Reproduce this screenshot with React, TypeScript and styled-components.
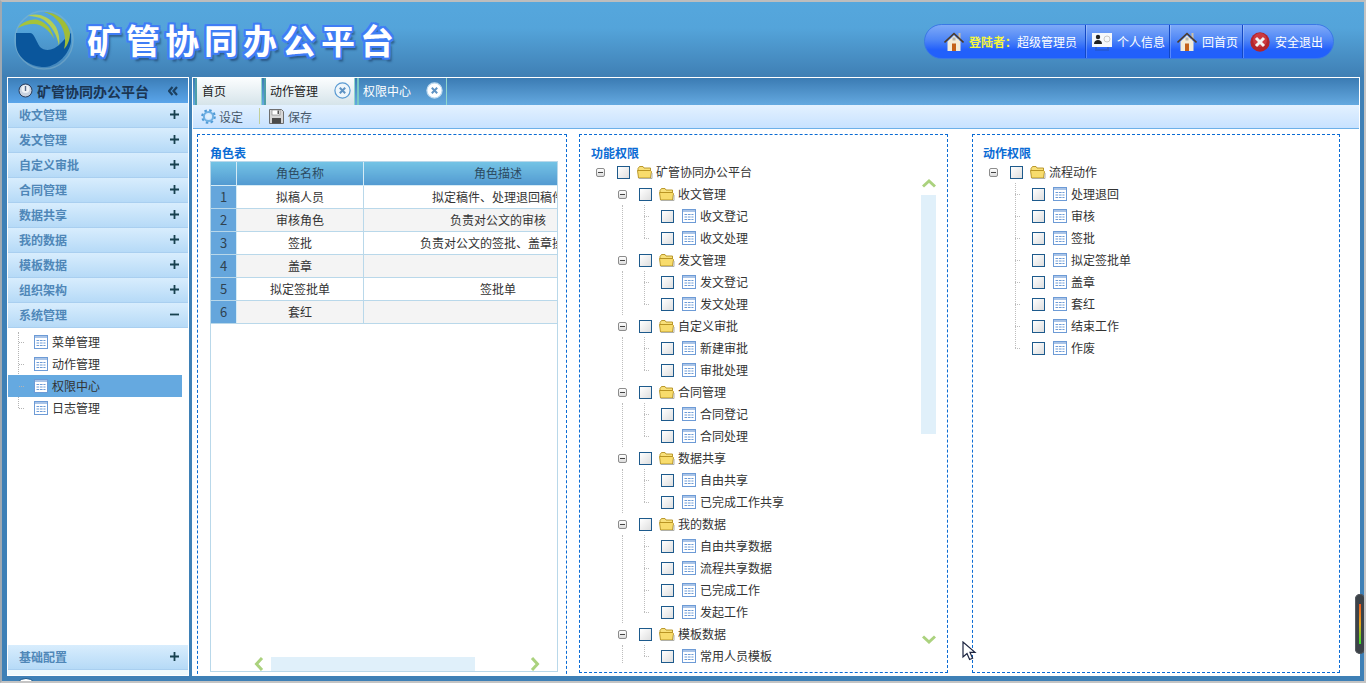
import React from 'react';
import styled, { createGlobalStyle } from 'styled-components';

const GlobalStyle = createGlobalStyle`
  html, body {
    margin: 0;
    padding: 0;
    background: #c4c4c4;
    overflow: hidden;
  }
  body, table {
    font-family: "Noto Sans CJK SC", "Liberation Sans", sans-serif;
    font-size: 12px;
  }
`;

const ACCORDION_TOP = ['收文管理', '发文管理', '自定义审批', '合同管理', '数据共享', '我的数据', '模板数据', '组织架构'];
const SYSTEM_ITEMS = ['菜单管理', '动作管理', '权限中心', '日志管理'];

const ROLES = [
  ['拟稿人员', '拟定稿件、处理退回稿件'],
  ['审核角色', '负责对公文的审核'],
  ['签批', '负责对公文的签批、盖章操作'],
  ['盖章', ''],
  ['拟定签批单', '签批单'],
  ['套红', ''],
];

const FUNCTION_TREE = [
  { name: '收文管理', leaves: ['收文登记', '收文处理'] },
  { name: '发文管理', leaves: ['发文登记', '发文处理'] },
  { name: '自定义审批', leaves: ['新建审批', '审批处理'] },
  { name: '合同管理', leaves: ['合同登记', '合同处理'] },
  { name: '数据共享', leaves: ['自由共享', '已完成工作共享'] },
  { name: '我的数据', leaves: ['自由共享数据', '流程共享数据', '已完成工作', '发起工作'] },
  { name: '模板数据', leaves: ['常用人员模板'] },
];

const ACTION_LEAVES = ['处理退回', '审核', '签批', '拟定签批单', '盖章', '套红', '结束工作', '作废'];

const PageTag = styled.div`
  position: relative;
  box-sizing: border-box;
  width: 1366px;
  height: 683px;
  display: flex;
  flex-direction: column;
  overflow: hidden;
  border-top: 2px solid #bdbdbd;
  border-left: 2px solid #9fa9b2;
  border-right: 2px solid #c4c4c4;
  border-bottom: 2px solid #c4c4c4;
  background: #3e80b6;
`;

const HeaderTag = styled.header`
  height: 75px;
  flex: none;
  display: flex;
  align-items: center;
  padding: 0 30px 0 12px;
  background: linear-gradient(#55a7dd 0%, #54a4da 35%, #3f7fb4 100%);
`;

const BrandTag = styled.div`
  display: flex;
  align-items: center;
  gap: 11px;
  margin-right: auto;
`;

const TitleTag = styled.h1`
  margin: 0;
  color: #fff;
  font-size: 34px;
  font-weight: 700;
  line-height: 44px;
  letter-spacing: 5px;
  white-space: nowrap;
  text-shadow: 2px 0 0 #3f7df5, -2px 0 0 #3f7df5, 0 2px 0 #3f7df5, 0 -2px 0 #3f7df5, 2px 2px 0 #3f7df5,
    -2px 2px 0 #3f7df5, 2px -2px 0 #3f7df5, -2px -2px 0 #3f7df5, 3px 4px 2px rgba(20, 50, 90, 0.55);
`;

const PillTag = styled.nav`
  display: flex;
  height: 35px;
  margin-top: 4px;
  box-sizing: border-box;
  overflow: hidden;
  border: 1px solid #3a78e6;
  border-radius: 18px;
  background: linear-gradient(#7eaaf8 0%, #4f86f6 45%, #2360fb 75%, #2060fb 100%);
`;

const PillItemTag = styled.div<{ $width: number; $inset: number; $last?: boolean }>`
  width: ${({ $width }) => $width}px;
  box-sizing: border-box;
  display: flex;
  align-items: center;
  gap: 5px;
  padding-left: ${({ $inset }) => $inset}px;
  color: #fff;
  white-space: nowrap;
  border-right: ${({ $last }) => ($last ? '0' : '1px solid #1248c4')};
  box-shadow: ${({ $last }) => ($last ? 'none' : '1px 0 0 rgba(255, 255, 255, 0.25)')};
`;

const GreetingTag = styled.b`
  color: #f6f63c;
`;

const BodyTag = styled.main`
  flex: 1;
  min-height: 0;
  display: flex;
  gap: 3px;
  padding: 0 2px 5px 5px;
`;

const SidebarTag = styled.aside`
  width: 182px;
  box-sizing: border-box;
  flex: none;
  display: flex;
  flex-direction: column;
  border: 1px solid #fff;
  background: #fff;
  padding-bottom: 5px;
  box-shadow: inset 0 -6px 0 #eef9fc;
`;

const SidebarHeadTag = styled.div`
  height: 25px;
  flex: none;
  display: flex;
  align-items: center;
  gap: 4px;
  padding: 0 10px 0 10px;
  color: #1b3552;
  font-size: 14px;
  font-weight: 700;
  background: linear-gradient(#3c7eb8, #5aa5ea);
`;

const SidebarHeadTextTag = styled.span`
  flex: 1;
  white-space: nowrap;
`;

const AccordionTag = styled.div`
  height: 25px;
  box-sizing: border-box;
  flex: none;
  display: flex;
  align-items: center;
  justify-content: space-between;
  padding: 0 9px 2px 11px;
  color: #4f87b8;
  font-weight: 700;
  border-bottom: 1px solid #a9cff0;
  background: linear-gradient(#d8edfd, #b6daf7);
`;

const SubListTag = styled.ul`
  position: relative;
  flex: 1;
  list-style: none;
  margin: 0;
  padding: 3px 0 0;

  &::before {
    content: '';
    position: absolute;
    left: 10px;
    top: 4px;
    height: 76px;
    border-left: 1px dotted #b4b4b4;
  }
`;

const SubItemTag = styled.li<{ $active?: boolean }>`
  position: relative;
  height: 22px;
  width: 174px;
  display: flex;
  align-items: center;
  padding-left: 25px;
  box-sizing: border-box;
  color: #333;
  background: ${({ $active }) => ($active ? '#65a9e0' : 'transparent')};

  &::before {
    content: '';
    position: absolute;
    left: 11px;
    width: 5px;
    border-top: 1px dotted #b4b4b4;
  }
`;

const MainTag = styled.section`
  width: 1168px;
  box-sizing: border-box;
  display: flex;
  flex-direction: column;
  border: 1px solid #fff;
  background: #fff;
`;

const TabStripTag = styled.div`
  height: 27px;
  flex: none;
  display: flex;
  align-items: stretch;
  gap: 2px;
  padding-left: 2px;
  background: linear-gradient(#3b7bb3, #64a9e0);
`;

const TabTag = styled.div<{ $width: number; $inset: number; $active?: boolean }>`
  width: ${({ $width }) => $width}px;
  box-sizing: border-box;
  display: flex;
  align-items: center;
  justify-content: space-between;
  padding: 0 3px 2px ${({ $inset }) => $inset}px;
  color: ${({ $active }) => ($active ? '#fff' : '#1c1c1c')};
  border-left: 2px solid ${({ $active }) => ($active ? '#76c8c4' : '#4f9fa8')};
  border-right: 1px solid #8fd6cc;
  background: ${({ $active }) =>
    $active ? 'linear-gradient(#3f80b8, #62a7dd)' : 'linear-gradient(#fbfdfe, #d6e4ea)'};
`;

const ToolbarTag = styled.div`
  height: 24px;
  box-sizing: border-box;
  flex: none;
  display: flex;
  align-items: center;
  padding: 0 0 1px 8px;
  color: #47596c;
  border-bottom: 1px solid #6db0e8;
  background: linear-gradient(#e3f1ff, #c8e2ff);
`;

const ToolButtonTag = styled.div`
  display: flex;
  align-items: center;
  gap: 3px;
`;

const ToolDividerTag = styled.span`
  width: 1px;
  height: 16px;
  margin: 0 9px 0 16px;
  background: #c2cf9a;
`;

const ContentTag = styled.div`
  flex: 1;
  min-height: 0;
  display: flex;
  align-items: flex-start;
  overflow: hidden;
  padding: 5px 0 0 4px;
  background: #fff;
`;

const PanelTag = styled.div<{ $width: number; $height: number; $gap: number; $inset: number }>`
  position: relative;
  width: ${({ $width }) => $width}px;
  height: ${({ $height }) => $height}px;
  flex: none;
  box-sizing: border-box;
  margin-right: ${({ $gap }) => $gap}px;
  padding: 11px 0 0 ${({ $inset }) => $inset}px;
  border: 1px dashed #0a6bd4;
  overflow: hidden;
`;

const PanelTitleTag = styled.div`
  height: 15px;
  line-height: 14px;
  color: #0a6bd4;
  font-weight: 700;
`;

const TableBoxTag = styled.div`
  position: relative;
  width: 348px;
  height: 511px;
  box-sizing: border-box;
  overflow: hidden;
  border: 1px solid #b9d8ea;
`;

const RoleTableTag = styled.table`
  width: 419px;
  table-layout: fixed;
  border-collapse: collapse;
  color: #333;
`;

const HeadCellTag = styled.th<{ $width: number }>`
  width: ${({ $width }) => $width}px;
  height: 21px;
  padding: 0 0 2px;
  font-weight: 400;
  color: #2c4a60;
  border-right: 1px solid #d5ebf5;
  border-bottom: 1px solid #d5ebf5;
  background: linear-gradient(#73c3e5, #539ad1);
`;

const NumberCellTag = styled.td`
  height: 21px;
  padding: 0 0 1px;
  text-align: center;
  font-size: 13px;
  line-height: 18px;
  color: #2f4250;
  background: #65a6dc;
  border-right: 1px solid #d5ebf5;
  border-bottom: 1px solid #b9d8ea;
`;

const CellTag = styled.td<{ $striped: boolean }>`
  padding: 0 0 1px;
  text-align: center;
  white-space: nowrap;
  overflow: visible;
  line-height: 18px;
  background: ${({ $striped }) => ($striped ? '#f4f4f4' : '#fff')};
  border-right: 1px solid #b9d8ea;
  border-bottom: 1px solid #b9d8ea;
`;

const HorizontalBarTag = styled.div`
  position: absolute;
  left: 41px;
  bottom: 0;
  height: 14px;
  display: flex;
  align-items: center;
`;

const HorizontalThumbTag = styled.span`
  flex: none;
  width: 204px;
  height: 14px;
  margin: 0 53px 0 5px;
  background: #e0f0fa;
`;

const VerticalBarTag = styled.div`
  position: absolute;
  left: 341px;
  top: 41px;
  width: 15px;
  display: flex;
  flex-direction: column;
  align-items: center;
`;

const VerticalThumbTag = styled.span`
  position: absolute;
  top: 19px;
  left: 0;
  width: 15px;
  height: 239px;
  background: #e0f0fa;
`;

const VerticalDownTag = styled.span`
  margin-top: 443px;
  display: flex;
`;

const TreeTag = styled.div<{ $indent: number }>`
  height: 503px;
  overflow: hidden;
  padding-left: ${({ $indent }) => $indent}px;
`;

const RowTag = styled.div<{ $depth: number }>`
  position: relative;
  height: 22px;
  display: flex;
  align-items: center;
  padding-left: ${({ $depth }) => $depth * 22}px;
  color: #333;
  white-space: nowrap;
`;

const ToggleSlotTag = styled.span`
  width: 22px;
  flex: none;
  display: flex;
  padding-left: 1px;
  box-sizing: border-box;
`;

const ToggleTag = styled.span`
  position: relative;
  width: 9px;
  height: 9px;
  box-sizing: border-box;
  border: 1px solid #8c8c8c;
  border-radius: 2px;
  background: linear-gradient(#fff, #dcdcdc);

  &::after {
    content: '';
    position: absolute;
    left: 1px;
    right: 1px;
    top: 3px;
    height: 1px;
    background: #444;
  }
`;

const CheckboxTag = styled.span`
  width: 13px;
  height: 13px;
  flex: none;
  box-sizing: border-box;
  margin-right: 7px;
  border: 1px solid #1d5a8c;
  background: linear-gradient(135deg, #fff, #dedede);
`;

const LabelTag = styled.span<{ $gap: number }>`
  margin: 0 0 2px ${({ $gap }) => $gap}px;
`;

const BranchTag = styled.div`
  position: relative;
`;

const TreeLineTag = styled.span<{ $left: number; $top: number; $bottom: number }>`
  position: absolute;
  left: ${({ $left }) => $left}px;
  top: ${({ $top }) => $top}px;
  bottom: ${({ $bottom }) => $bottom}px;
  border-left: 1px dotted #bdbdbd;
`;

const LeafStubTag = styled.span<{ $left: number }>`
  position: absolute;
  left: ${({ $left }) => $left}px;
  width: 5px;
  border-top: 1px dotted #bdbdbd;
`;

const WidgetTag = styled.div`
  position: absolute;
  right: -1px;
  top: 592px;
  width: 10px;
  height: 60px;
  display: flex;
  justify-content: center;
  align-items: center;
  border-radius: 5px;
  background: #3c4248;
  box-shadow: inset 0 0 0 1px #575c62;
`;

const WidgetMeterTag = styled.span`
  width: 2px;
  height: 40px;
  background: linear-gradient(#f05a1c, #e8a81c 50%, #34e02c);
`;

const CursorTag = styled.svg`
  position: absolute;
  left: 960px;
  top: 639px;
`;

const DockTag = styled.span`
  position: absolute;
  left: 12px;
  bottom: -21px;
  width: 22px;
  height: 22px;
  border: 1px solid #1d5a8c;
  border-radius: 50%;
  background: #fff;
`;

const Logo = () => (
  <svg width="62" height="62" viewBox="0 0 62 62">
    <circle cx="30" cy="31" r="29" fill="none" stroke="#8fb8cc" strokeOpacity="0.45" strokeWidth="1.5" />
    <path d="M2 24H16C20 24 22 32 26 38C31 43 40 42 47 34C52 29 55 26 57 24L57 33C55 45 44 57 31 58C15 58 2 48 2 34Z" fill="#0a569c" />
    <path d="M4 19C8 12 20 8 27 12C35 16 39 24 40 30C36 22 28 15 20 15C13 15 8 17 4 19Z" fill="#a5c33a" />
    <path d="M14 7C24 3 36 8 42 18C45 24 46 30 45 37C43 26 38 17 30 11C25 8 19 7 14 7Z" fill="#b4cf52" />
    <path d="M30 3C42 3 54 12 56 24C56 30 54 36 50 40C53 30 50 17 42 10C38 6 34 4 30 3Z" fill="#a0bd36" />
  </svg>
);

const House = () => (
  <svg width="20" height="20" viewBox="0 0 20 20">
    <rect x="14.5" y="1" width="2" height="7" fill="#cbbfa8" />
    <path d="M3.5 9.5 10 3.5l6.5 6V19h-13Z" fill="#f3ecd8" />
    <path d="M0.5 10.5 10 1.5l9.5 9" fill="none" stroke="#4c3a28" strokeWidth="1.6" />
    <rect x="8" y="11.5" width="4" height="7.5" fill="#c4621a" />
    <rect x="8.5" y="5.5" width="3" height="3" fill="#b9b6ac" />
  </svg>
);

const PersonCard = () => (
  <svg width="20" height="20" viewBox="0 0 20 20">
    <rect x="0" y="1" width="20" height="14" fill="#f6f8fb" />
    <circle cx="6" cy="5" r="2.2" fill="#222" />
    <path d="M2 12c0-3 2-4 4-4s4 1 4 4Z" fill="#222" />
    <circle cx="15" cy="7" r="3" fill="none" stroke="#c8c8c8" />
    <path d="M4 15v2m12-2v2" stroke="#3a5a90" />
    <path d="M3 18h14" stroke="#2a4a90" strokeOpacity="0.6" />
  </svg>
);

const ExitIcon = () => (
  <svg width="20" height="20" viewBox="0 0 20 20">
    <circle cx="10" cy="10" r="9.7" fill="#b3242c" />
    <circle cx="10" cy="8" r="7" fill="#cc3a40" />
    <path d="M6 6l8 8M14 6l-8 8" stroke="#f2f2f2" strokeWidth="3" />
  </svg>
);

const ClockBadge = () => (
  <svg width="15" height="15" viewBox="0 0 15 15">
    <circle cx="7.5" cy="7.5" r="6.5" fill="#c8d2e0" stroke="#2c3e5c" />
    <circle cx="7.5" cy="6" r="4" fill="#eef2f6" />
    <path d="M7.5 3v5" stroke="#5a6c88" strokeWidth="1.4" />
  </svg>
);

const DoubleChevron = () => (
  <svg width="10" height="10" viewBox="0 0 10 10">
    <path d="M4.5 1 1 5l3.5 4M9 1 5.5 5 9 9" fill="none" stroke="#1c4060" strokeWidth="2.2" />
  </svg>
);

const Sign = ({ open }: { open?: boolean }) => (
  <svg width="9" height="9" viewBox="0 0 9 9">
    <path d={open ? 'M0 4.5h9' : 'M0 4.5h9M4.5 0v9'} stroke="#17414f" strokeWidth="1.8" />
  </svg>
);

const TableIcon = () => (
  <svg width="15" height="14" viewBox="0 0 15 14" style={{ flex: 'none' }}>
    <rect x="1.5" y="0.5" width="13" height="13" fill="#fff" stroke="#6d9bd6" />
    <rect x="2" y="1" width="12" height="2" fill="#a9c4e8" />
    <path d="M3.5 5.5h9M3.5 8h9M3.5 10.5h9" stroke="#6d9bd6" />
    <path d="M6.5 4v8M10 4v8" stroke="#fff" strokeWidth="0.8" />
  </svg>
);

const FolderIcon = () => (
  <svg width="16" height="14" viewBox="0 0 16 14" style={{ flex: 'none' }}>
    <path d="M1 3.5 2.5 1.5H6L7 3h6.5v3H1Z" fill="#f8e07a" stroke="#b38f1e" strokeWidth="0.9" />
    <path d="M0.5 5.5h13l1 1.2-1 6.3H1.5Z" fill="#f8dc6c" stroke="#b38f1e" strokeWidth="0.9" />
    <path d="M2 13.5h13V8" fill="none" stroke="#b0b0a8" />
  </svg>
);

const GearIcon = () => (
  <svg width="15" height="15" viewBox="0 0 15 15">
    <circle cx="7.5" cy="7.5" r="6" fill="none" stroke="#4f9ad6" strokeWidth="2.6" strokeDasharray="2.4 2.3" />
    <circle cx="7.5" cy="7.5" r="4.6" fill="none" stroke="#6fb0e2" strokeWidth="2" />
    <circle cx="7.5" cy="7.5" r="2.2" fill="#dff0fb" />
  </svg>
);

const SaveIcon = () => (
  <svg width="16" height="15" viewBox="0 0 16 15">
    <path d="M0.5 0.5h12l2 2v12h-14Z" fill="#d6d6d6" stroke="#6e6e6e" />
    <rect x="3" y="1" width="8" height="5" fill="#fff" stroke="#777" strokeWidth="0.6" />
    <rect x="3" y="9" width="9" height="5.5" fill="#4a4a4a" />
    <rect x="8.5" y="1.5" width="1.5" height="3.5" fill="#555" />
  </svg>
);

const CloseBadge = ({ active }: { active?: boolean }) => (
  <svg width="17" height="17" viewBox="0 0 17 17">
    <circle cx="8.5" cy="8.5" r="7.6" fill={active ? '#fff' : '#eef6fb'} stroke={active ? '#bcd9ef' : '#5a9ad2'} strokeWidth="1.2" />
    <path d="M5.8 5.8l5.4 5.4M11.2 5.8l-5.4 5.4" stroke="#5f93c4" strokeWidth="2" />
  </svg>
);

const Chevron = ({ direction }: { direction: 'up' | 'down' | 'left' | 'right' }) => {
  const paths = {
    up: 'M1 10.5l6-5.5 6 5.5',
    down: 'M1 3.5l6 5.5 6-5.5',
    left: 'M10 1 4.5 7l5.5 6',
    right: 'M4 1l5.5 6L4 13',
  };
  return (
    <svg width="14" height="14" viewBox="0 0 14 14" style={{ flex: 'none' }}>
      <path d={paths[direction]} fill="none" stroke="#abd27e" strokeWidth="3" />
    </svg>
  );
};

const Leaf = ({ depth, name }: { depth: number; name: string }) => (
  <RowTag $depth={depth}>
    <LeafStubTag $left={depth * 22 + 5} />
    <ToggleSlotTag />
    <CheckboxTag />
    <TableIcon />
    <LabelTag $gap={4}>{name}</LabelTag>
  </RowTag>
);

const FolderRow = ({ depth, name }: { depth: number; name: string }) => (
  <RowTag $depth={depth}>
    <ToggleSlotTag>
      <ToggleTag />
    </ToggleSlotTag>
    <CheckboxTag />
    <FolderIcon />
    <LabelTag $gap={3}>{name}</LabelTag>
  </RowTag>
);

const App = () => (
  <PageTag>
    <GlobalStyle />
    <HeaderTag>
      <BrandTag>
        <Logo />
        <TitleTag>矿管协同办公平台</TitleTag>
      </BrandTag>
      <PillTag>
        <PillItemTag $width={161} $inset={19}>
          <House />
          <span>
            <GreetingTag>登陆者：</GreetingTag>超级管理员
          </span>
        </PillItemTag>
        <PillItemTag $width={84} $inset={6}>
          <PersonCard />
          个人信息
        </PillItemTag>
        <PillItemTag $width={73} $inset={7}>
          <House />
          回首页
        </PillItemTag>
        <PillItemTag $width={90} $inset={7} $last>
          <ExitIcon />
          安全退出
        </PillItemTag>
      </PillTag>
    </HeaderTag>

    <BodyTag>
      <SidebarTag>
        <SidebarHeadTag>
          <ClockBadge />
          <SidebarHeadTextTag>矿管协同办公平台</SidebarHeadTextTag>
          <DoubleChevron />
        </SidebarHeadTag>
        {ACCORDION_TOP.map((name) => (
          <AccordionTag key={name}>
            {name}
            <Sign />
          </AccordionTag>
        ))}
        <AccordionTag>
          系统管理
          <Sign open />
        </AccordionTag>
        <SubListTag>
          {SYSTEM_ITEMS.map((name) => (
            <SubItemTag key={name} $active={name === '权限中心'}>
              <TableIcon />
              <LabelTag $gap={4}>{name}</LabelTag>
            </SubItemTag>
          ))}
        </SubListTag>
        <AccordionTag>
          基础配置
          <Sign />
        </AccordionTag>
      </SidebarTag>

      <MainTag>
        <TabStripTag>
          <TabTag $width={67} $inset={5}>
            首页
          </TabTag>
          <TabTag $width={91} $inset={4}>
            动作管理
            <CloseBadge />
          </TabTag>
          <TabTag $width={90} $inset={4} $active>
            权限中心
            <CloseBadge active />
          </TabTag>
        </TabStripTag>
        <ToolbarTag>
          <ToolButtonTag>
            <GearIcon />
            设定
          </ToolButtonTag>
          <ToolDividerTag />
          <ToolButtonTag>
            <SaveIcon />
            保存
          </ToolButtonTag>
        </ToolbarTag>
        <ContentTag>
          <PanelTag $width={370} $height={560} $gap={12} $inset={12}>
            <PanelTitleTag>角色表</PanelTitleTag>
            <TableBoxTag>
              <RoleTableTag>
                <thead>
                  <tr>
                    <HeadCellTag $width={25} />
                    <HeadCellTag $width={126}>角色名称</HeadCellTag>
                    <HeadCellTag $width={268}>角色描述</HeadCellTag>
                  </tr>
                </thead>
                <tbody>
                  {ROLES.map(([name, description], index) => (
                    <tr key={name}>
                      <NumberCellTag>{index + 1}</NumberCellTag>
                      <CellTag $striped={index % 2 === 1}>{name}</CellTag>
                      <CellTag $striped={index % 2 === 1}>{description}</CellTag>
                    </tr>
                  ))}
                </tbody>
              </RoleTableTag>
              <HorizontalBarTag>
                <Chevron direction="left" />
                <HorizontalThumbTag />
                <Chevron direction="right" />
              </HorizontalBarTag>
            </TableBoxTag>
          </PanelTag>

          <PanelTag $width={369} $height={539} $gap={24} $inset={11}>
            <PanelTitleTag>功能权限</PanelTitleTag>
            <TreeTag $indent={4}>
              <FolderRow depth={0} name="矿管协同办公平台" />
              {FUNCTION_TREE.map((group) => (
                <BranchTag key={group.name}>
                  <FolderRow depth={1} name={group.name} />
                  <TreeLineTag $left={27} $top={22} $bottom={0} />
                  <TreeLineTag $left={49} $top={22} $bottom={11} />
                  {group.leaves.map((leaf) => (
                    <Leaf key={leaf} depth={2} name={leaf} />
                  ))}
                </BranchTag>
              ))}
            </TreeTag>
            <VerticalBarTag>
              <Chevron direction="up" />
              <VerticalThumbTag />
              <VerticalDownTag>
                <Chevron direction="down" />
              </VerticalDownTag>
            </VerticalBarTag>
          </PanelTag>

          <PanelTag $width={368} $height={539} $gap={0} $inset={10}>
            <PanelTitleTag>动作权限</PanelTitleTag>
            <TreeTag $indent={5}>
              <BranchTag>
                <FolderRow depth={0} name="流程动作" />
                <TreeLineTag $left={27} $top={22} $bottom={11} />
                {ACTION_LEAVES.map((leaf) => (
                  <Leaf key={leaf} depth={1} name={leaf} />
                ))}
              </BranchTag>
            </TreeTag>
          </PanelTag>
        </ContentTag>
      </MainTag>
    </BodyTag>

    <DockTag />
    <WidgetTag>
      <WidgetMeterTag />
    </WidgetTag>
    <CursorTag width="16" height="22" viewBox="0 0 16 22">
      <path d="M1 1v15l4-3.5 2.6 6 3-1.3-2.6-5.8H13Z" fill="#fff" stroke="#1c2440" strokeWidth="1.2" />
    </CursorTag>
  </PageTag>
);

export default App;
